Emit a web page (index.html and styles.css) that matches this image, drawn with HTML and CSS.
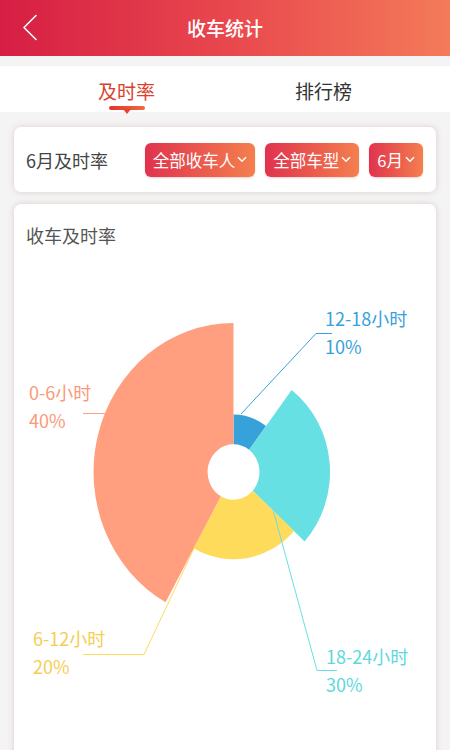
FILE: index.html
```html
<!DOCTYPE html>
<html lang="zh-CN">
<head>
<meta charset="utf-8">
<title>收车统计</title>
<link rel="stylesheet" href="styles.css">
</head>
<body>
<header class="header">
  <div class="back">
    <svg width="20" height="30" viewBox="0 0 20 30"><polyline points="15,2.5 3,14.5 15,26.5" fill="none" stroke="#fff" stroke-width="1.6" stroke-linecap="round" stroke-linejoin="round"/></svg>
  </div>
  <h1 class="title">收车统计</h1>
  <div></div>
</header>

<nav class="tabs">
  <div class="tab active"><span>及时率</span><i class="tab-line"></i></div>
  <div class="tab"><span>排行榜</span></div>
</nav>

<section class="filter">
  <div class="filter-label">6月及时率</div>
  <div class="btn">全部收车人<svg width="10" height="7" viewBox="0 0 10 7"><polyline points="1,1.2 5,5.2 9,1.2" fill="none" stroke="#fff" stroke-width="1.5"/></svg></div>
  <div class="btn">全部车型<svg width="10" height="7" viewBox="0 0 10 7"><polyline points="1,1.2 5,5.2 9,1.2" fill="none" stroke="#fff" stroke-width="1.5"/></svg></div>
  <div class="btn">6月<svg width="10" height="7" viewBox="0 0 10 7"><polyline points="1,1.2 5,5.2 9,1.2" fill="none" stroke="#fff" stroke-width="1.5"/></svg></div>
</section>

<section class="chart-card">
  <div class="chart-title">收车及时率</div>
  <svg class="chart" viewBox="14 260 422 500" width="422" height="500">
    <g transform="translate(233.5 472) scale(1 1.065)">
      <path d="M0,-54 A54,54 0 0 1 32.5,-43.1 L15.6,-20.8 A26,26 0 0 0 0,-26 Z" fill="#37a2da"/>
      <path d="M58.1,-77.1 A96.5,96.5 0 0 1 71.1,65.2 L19.2,17.6 A26,26 0 0 0 15.6,-20.8 Z" fill="#67e0e3"/>
      <path d="M60.5,55.4 A82,82 0 0 1 -39.8,71.7 L-12.6,22.7 A26,26 0 0 0 19.2,17.6 Z" fill="#ffdb5c"/>
      <path d="M-67.9,122.4 A140,140 0 0 1 0,-140 L0,-26 A26,26 0 0 0 -12.6,22.7 Z" fill="#ff9f7f"/>
    </g>
    <g fill="none" stroke-width="1">
      <polyline points="241,414 316,333.5 332,333.5" stroke="#37a2da"/>
      <polyline points="83,413.5 105,413.5" stroke="#ff9f7f"/>
      <polyline points="197,542 144,654.5 83,654.5" stroke="#ffdb5c"/>
      <polyline points="273.5,511.5 317,670.5 337,670.5" stroke="#67e0e3"/>
    </g>
    <g class="labels">
      <text x="325" y="326" fill="#37a2da">12-18小时</text>
      <text x="325" y="354" fill="#37a2da">10%</text>
      <text x="29" y="400" fill="#fa9a78">0-6小时</text>
      <text x="29" y="428" fill="#fa9a78">40%</text>
      <text x="33" y="646" fill="#f4ce52">6-12小时</text>
      <text x="33" y="674" fill="#f4ce52">20%</text>
      <text x="326" y="664" fill="#5ed8dc">18-24小时</text>
      <text x="326" y="692" fill="#5ed8dc">30%</text>
    </g>
  </svg>
</section>
</body>
</html>
```

FILE: styles.css
```css
* { box-sizing: border-box; }

body {
  margin: 0;
  width: 450px;
  background: #f4f4f4;
  font-family: "Noto Sans CJK SC", "Noto Sans", sans-serif;
}

.header {
  height: 56px;
  display: grid;
  grid-template-columns: 56px 1fr 56px;
  align-items: center;
  background: linear-gradient(90deg, #d61e44 0%, #e8474d 50%, #f47b5a 100%);
}

.back {
  display: flex;
  align-items: center;
  padding-left: 21px;
  height: 56px;
}

.title {
  margin: 0;
  text-align: center;
  color: #fff;
  font-size: 19px;
  font-weight: 500;
  line-height: 56px;
}

.tabs {
  margin-top: 10px;
  height: 46px;
  background: #fff;
  display: flex;
  padding: 0 28px;
}

.tab {
  flex: 1;
  display: flex;
  flex-direction: column;
  align-items: center;
  padding-top: 12px;
  font-size: 19px;
  line-height: 26px;
  color: #333;
}

.tab.active { color: #d9412c; }

.tab-line {
  display: block;
  margin-top: 2px;
  width: 36px;
  height: 4px;
  border-radius: 2px;
  background: linear-gradient(90deg, #e2352a, #f26a40);
  position: relative;
}

.tab-line::after {
  content: "";
  position: absolute;
  left: 50%;
  top: 3px;
  margin-left: -4px;
  border-left: 4px solid transparent;
  border-right: 4px solid transparent;
  border-top: 5px solid #e8452e;
}

.filter {
  margin: 15px 14px 0;
  height: 65px;
  background: #fff;
  border-radius: 7px;
  box-shadow: 0 0 6px rgba(190, 140, 140, 0.38);
  display: flex;
  align-items: center;
  padding: 0 13px 0 12px;
}

.filter-label {
  font-size: 18px;
  color: #444;
  margin-right: auto;
}

.btn {
  height: 34px;
  display: flex;
  align-items: center;
  padding: 0 8px;
  margin-left: 10px;
  border-radius: 6px;
  background: linear-gradient(90deg, #e0334e, #f47f4e);
  color: #fff;
  font-size: 16.5px;
  box-shadow: 0 1px 2px rgba(200, 60, 60, 0.25);
}

.btn svg { margin-left: 2px; }

.chart-card {
  margin: 12px 14px 0;
  background: #fff;
  border-radius: 7px;
  box-shadow: 0 0 6px rgba(190, 140, 140, 0.38);
  padding-top: 20px;
}

.chart-title {
  padding-left: 12px;
  font-size: 18px;
  line-height: 22px;
  color: #555;
  margin-bottom: 14px;
}

.chart {
  display: block;
  width: 422px;
  height: 500px;
}

.labels text {
  font-size: 18px;
  font-family: "Noto Sans CJK SC", "Noto Sans", sans-serif;
}
```
